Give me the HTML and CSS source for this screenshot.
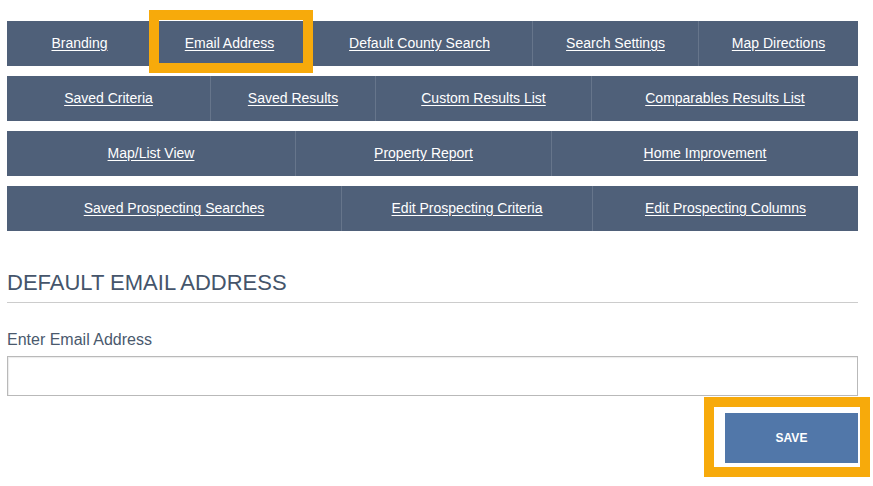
FILE: index.html
```html
<!DOCTYPE html>
<html lang="en">
<head>
<meta charset="utf-8">
<title>Default Email Address</title>
<link rel="stylesheet" href="styles.css">
</head>
<body>
<div class="page">
  <nav class="tabs">
    <div class="tab-row row-1">
      <div class="tab"><a href="#">Branding</a></div>
      <div class="tab tab-active"><a href="#">Email Address</a><span class="highlight highlight-tab"></span></div>
      <div class="tab"><a href="#">Default County Search</a></div>
      <div class="tab"><a href="#">Search Settings</a></div>
      <div class="tab"><a href="#">Map Directions</a></div>
    </div>
    <div class="tab-row row-2">
      <div class="tab"><a href="#">Saved Criteria</a></div>
      <div class="tab"><a href="#">Saved Results</a></div>
      <div class="tab"><a href="#">Custom Results List</a></div>
      <div class="tab"><a href="#">Comparables Results List</a></div>
    </div>
    <div class="tab-row row-3">
      <div class="tab"><a href="#">Map/List View</a></div>
      <div class="tab"><a href="#">Property Report</a></div>
      <div class="tab"><a href="#">Home Improvement</a></div>
    </div>
    <div class="tab-row row-4">
      <div class="tab"><a href="#">Saved Prospecting Searches</a></div>
      <div class="tab"><a href="#">Edit Prospecting Criteria</a></div>
      <div class="tab"><a href="#">Edit Prospecting Columns</a></div>
    </div>
  </nav>

  <section class="panel">
    <h2 class="panel-title">DEFAULT EMAIL ADDRESS</h2>
    <label class="field-label" for="email">Enter Email Address</label>
    <input class="field-input" id="email" type="text">
    <div class="actions">
      <div class="save-wrap">
        <button class="save-btn" type="button">SAVE</button>
        <span class="highlight highlight-save"></span>
      </div>
    </div>
  </section>
</div>
</body>
</html>
```

FILE: styles.css
```css
* { box-sizing: border-box; }

html, body {
  margin: 0;
  padding: 0;
  background: #ffffff;
}

body {
  font-family: "Liberation Sans", Arial, sans-serif;
}

.page {
  width: 851px;
  margin-left: 7px;
  padding-top: 21px;
  padding-bottom: 23px;
}

.tabs {
  display: flex;
  flex-direction: column;
  gap: 10px;
}

.tab-row {
  display: grid;
  height: 45px;
  background: #4f6079;
}

.row-1 { grid-template-columns: 145px 155px 225px 166px 160px; }
.row-2 { grid-template-columns: 203px 165px 216px 267px; }
.row-3 { grid-template-columns: 288px 256px 307px; }
.row-4 { grid-template-columns: 334px 251px 266px; }

.tab {
  position: relative;
  display: flex;
  align-items: center;
  justify-content: center;
  padding-bottom: 1px;
  border-left: 1px solid #66758b;
}

.tab:first-child { border-left: none; }
.row-1 .tab-active { border-left: none; }
.row-1 .tab-active + .tab { border-left: none; }

.tab a {
  color: #ffffff;
  font-size: 14px;
  text-decoration: underline;
  text-underline-offset: 2px;
}

.highlight {
  position: absolute;
  border: 10px solid #f7aa0b;
  pointer-events: none;
}

.highlight-tab {
  left: -3px;
  top: -11px;
  width: 164px;
  height: 63px;
}

.panel {
  margin-top: 39px;
}

.panel-title {
  margin: 0;
  font-weight: normal;
  font-size: 22px;
  line-height: 26px;
  color: #45556b;
  padding-bottom: 6px;
  border-bottom: 1px solid #cccccc;
}

.field-label {
  display: block;
  margin-top: 28px;
  font-size: 16px;
  line-height: 18px;
  color: #4a596d;
}

.field-input {
  display: block;
  width: 100%;
  height: 40px;
  margin-top: 7px;
  border: 1px solid #b9b9b9;
  box-shadow: inset 1px 1px 1px rgba(0, 0, 0, 0.08);
  background: #ffffff;
  font-family: inherit;
  font-size: 14px;
  padding: 0 10px;
}

.actions {
  display: flex;
  justify-content: flex-end;
  margin-top: 17px;
}

.save-wrap {
  position: relative;
}

.save-btn {
  display: block;
  width: 133px;
  height: 50px;
  border: none;
  background: #5177a9;
  color: #ffffff;
  font-family: "Liberation Sans", Arial, sans-serif;
  font-weight: bold;
  font-size: 12px;
  padding: 0;
}

.highlight-save {
  left: -21px;
  top: -16px;
  width: 166px;
  height: 80px;
}
```
